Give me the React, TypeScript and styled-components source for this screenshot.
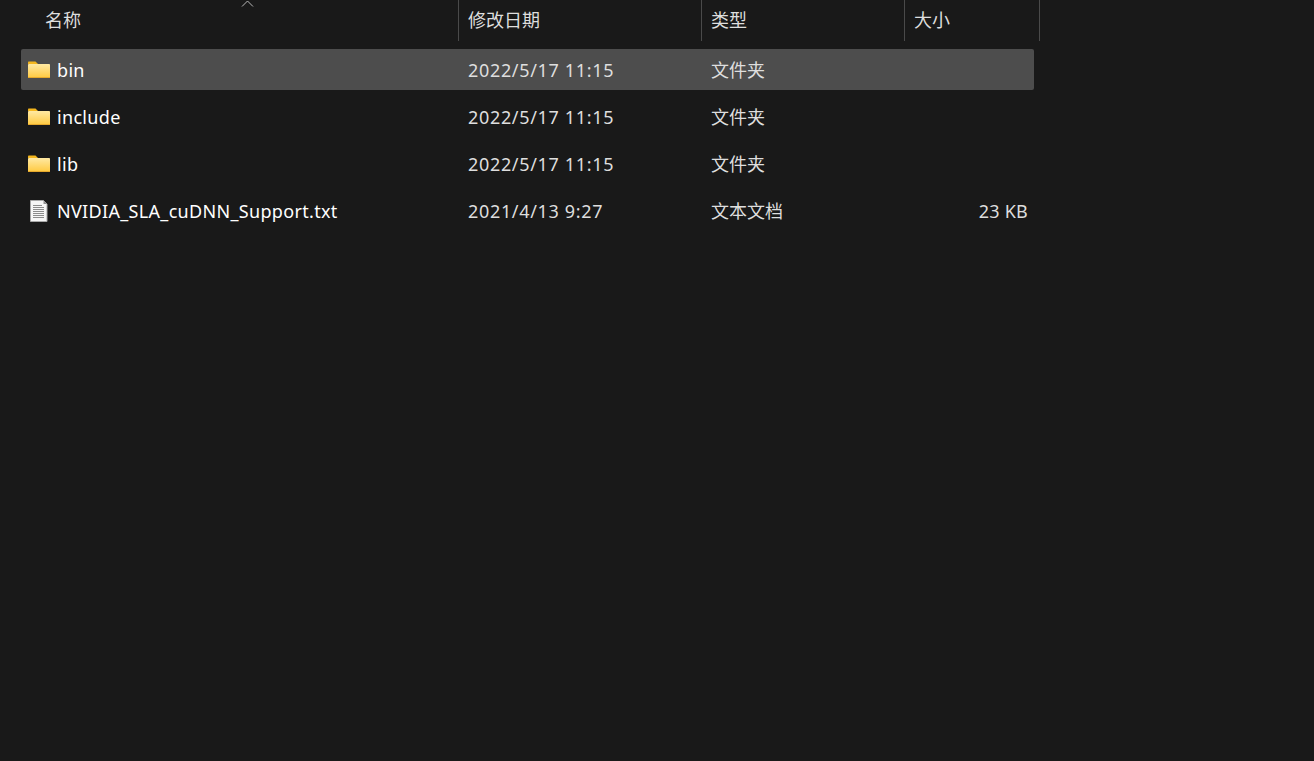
import React from 'react';
import styled, { createGlobalStyle } from 'styled-components';

const T = {
  bg: '#191919',
  selected: '#4d4d4d',
  line: '#4a4a4a',
  text: '#ffffff',
  textMuted: '#dedede',
} as const;

const FONT = '"Noto Sans", "Noto Sans CJK SC", sans-serif';

const GlobalStyle = createGlobalStyle`
  html, body {
    margin: 0;
    height: 100%;
    background: ${T.bg};
  }
  #root {
    height: 100%;
  }
`;

const Page = styled.div`
  height: 761px;
  overflow: hidden;
  background: ${T.bg};
  font-family: ${FONT};
  font-size: 18px;
  color: ${T.textMuted};
`;

const Header = styled.div`
  display: grid;
  grid-template-columns: 459px 243px 203px 135px;
  height: 40px;
  margin-bottom: 9px;
`;

const HeaderCell = styled.div<{ $first?: boolean }>`
  position: relative;
  box-sizing: border-box;
  padding-left: ${({ $first }) => ($first ? '45px' : '9px')};
  border-right: 1px solid ${T.line};
  line-height: 41px;
`;

const SortArrow = styled.svg`
  position: absolute;
  left: 241px;
  top: 0;
`;

const List = styled.div`
  display: grid;
  gap: 6px;
  margin-left: 21px;
  width: 1013px;
`;

const Row = styled.div<{ $selected?: boolean }>`
  display: grid;
  grid-template-columns: 438px 243px 203px 129px;
  align-items: center;
  height: 41px;
  border-radius: 2px;
  background: ${({ $selected }) => ($selected ? T.selected : 'transparent')};
`;

const NameCell = styled.div`
  display: flex;
  align-items: center;
  gap: 7px;
  padding-left: 7px;
  color: ${T.text};
  white-space: nowrap;
  letter-spacing: 0.32px;
`;

const DateCell = styled.div`
  padding-left: 9px;
  white-space: nowrap;
  letter-spacing: 0.67px;
`;

const TypeCell = styled.div`
  padding-left: 9px;
  white-space: nowrap;
  line-height: 24px;
`;

const SizeCell = styled.div`
  padding-right: 6px;
  text-align: right;
  white-space: nowrap;
  letter-spacing: 0.25px;
`;

const IconBox = styled.svg`
  flex: none;
  display: block;
`;

function FolderIcon() {
  return (
    <IconBox width="22" height="22" viewBox="0 0 22 22">
      <defs>
        <linearGradient id="folderBody" x1="0" y1="0" x2="0" y2="1">
          <stop offset="0" stopColor="#ffe9a3" />
          <stop offset="1" stopColor="#ffc93f" />
        </linearGradient>
      </defs>
      <path d="M0 3.5C0 3 .4 2.5 1 2.5h6.5L10 5H0z" fill="#f5b71e" />
      <rect x="0" y="5" width="22" height="14" rx="0.8" fill="url(#folderBody)" />
      <rect x="0" y="18" width="22" height="1" fill="#e6a92c" />
    </IconBox>
  );
}

function TextFileIcon() {
  return (
    <IconBox width="22" height="22" viewBox="0 0 22 22">
      <path d="M2.5 .5h13l3.5 3.5v17.5H2.5z" fill="#f6f6f6" stroke="#a8a8a8" />
      <path d="M15.5 .5V4H19z" fill="#8f8f8f" />
      <path
        d="M5 5.5h9M5 7.5h11M5 9.5h11M5 11.5h11M5 13.5h11M5 15.5h11M5 17.5h11"
        stroke="#8c8c8c"
        strokeWidth="1"
      />
    </IconBox>
  );
}

const FILES = [
  { name: 'bin', date: '2022/5/17 11:15', type: '文件夹', size: '', folder: true, selected: true },
  { name: 'include', date: '2022/5/17 11:15', type: '文件夹', size: '', folder: true },
  { name: 'lib', date: '2022/5/17 11:15', type: '文件夹', size: '', folder: true },
  { name: 'NVIDIA_SLA_cuDNN_Support.txt', date: '2021/4/13 9:27', type: '文本文档', size: '23 KB', folder: false },
];

export default function App() {
  return (
    <Page>
      <GlobalStyle />
      <Header>
        <HeaderCell $first>
          名称
          <SortArrow width="13" height="7" viewBox="0 0 13 7">
            <path d="M1 6.5L6.5 1L12 6.5" fill="none" stroke="#b8b8b8" strokeWidth="1" />
          </SortArrow>
        </HeaderCell>
        <HeaderCell>修改日期</HeaderCell>
        <HeaderCell>类型</HeaderCell>
        <HeaderCell>大小</HeaderCell>
      </Header>
      <List>
        {FILES.map((file) => (
          <Row key={file.name} $selected={file.selected}>
            <NameCell>
              {file.folder ? <FolderIcon /> : <TextFileIcon />}
              {file.name}
            </NameCell>
            <DateCell>{file.date}</DateCell>
            <TypeCell>{file.type}</TypeCell>
            <SizeCell>{file.size}</SizeCell>
          </Row>
        ))}
      </List>
    </Page>
  );
}
